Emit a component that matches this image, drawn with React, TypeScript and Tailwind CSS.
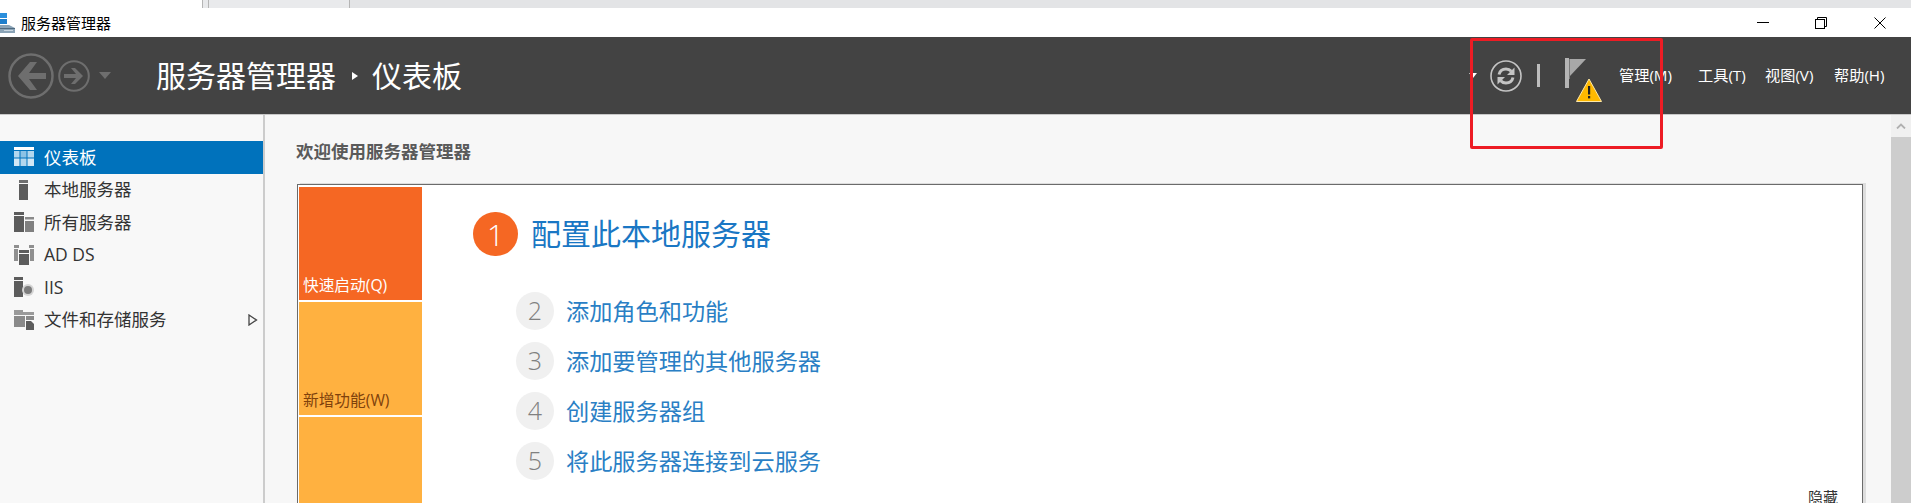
const FONT = "font-['Open_Sans','Noto_Sans_CJK_SC',sans-serif]";

function BackIcon() {
  return (
    <svg width="46" height="46" viewBox="0 0 46 46" fill="none" stroke="#6e6e6e">
      <circle cx="23" cy="23" r="21.5" strokeWidth="2.5" />
      <path d="M38 20v6H21l8 11h-7L10 23 22 9h7l-8 11z" fill="#6e6e6e" stroke="none" />
    </svg>
  );
}

function ForwardIcon() {
  return (
    <svg width="32" height="32" viewBox="0 0 32 32" fill="none" stroke="#6e6e6e">
      <circle cx="16" cy="16" r="14.8" strokeWidth="2" />
      <path d="M6 14h12l-5-6h4l8 8-8 8h-4l5-6H6z" fill="#6e6e6e" stroke="none" />
    </svg>
  );
}

function RefreshIcon() {
  return (
    <svg width="32" height="32" viewBox="0 0 32 32" fill="none" stroke="#c4c4c4">
      <circle cx="16" cy="16" r="15" strokeWidth="1.6" />
      <path d="M9 14.500c.8-3.400 3.600-5.500 7-5.500 2.200 0 4 .8 5.300 2.300" strokeWidth="3" />
      <path d="M24.500 7.500v7.500h-7.500z" fill="#c4c4c4" stroke="none" />
      <path d="M23 17.500c-.8 3.400-3.600 5.500-7 5.500-2.200 0-4-.8-5.300-2.300" strokeWidth="3" />
      <path d="M7.500 24.500v-7.500h7.500z" fill="#c4c4c4" stroke="none" />
    </svg>
  );
}

function FlagWarningIcon() {
  return (
    <svg width="38" height="46" viewBox="0 0 38 46">
      <rect x="0" y="0" width="4" height="30" fill="#b5b5b5" />
      <rect x="4" y="1" width="1" height="20" fill="#7a7a7a" />
      <path d="M5 1h16L5 18z" fill="#a8a8a8" />
      <path d="M24 21 36.500 43.500H11.500z" fill="#ffb900" stroke="#ffe9a8" strokeWidth="1" strokeLinejoin="round" />
      <rect x="23" y="28" width="2.200" height="8.500" fill="#222" />
      <rect x="23" y="38" width="2.200" height="2.400" fill="#222" />
    </svg>
  );
}

function AppIcon() {
  return (
    <svg width="16" height="20" viewBox="0 0 16 20">
      <rect x="0" y="0" width="7" height="5" fill="#2b8fdc" />
      <rect x="0" y="6" width="7" height="5" fill="#1f7fcc" />
      <path d="M0 12h9l6 3v5H0z" fill="#8aa3b6" />
      <rect x="0" y="15" width="15" height="1" fill="#4f6a80" />
      <rect x="4" y="17" width="9" height="1" fill="#c9d6e0" />
    </svg>
  );
}

function DashIcon() {
  return (
    <svg width="20" height="20" viewBox="0 0 20 20">
      <rect x="0" y="0" width="20" height="3" fill="#ffffff" />
      <rect x="0" y="4" width="5.500" height="6.500" fill="#b3d7ee" />
      <rect x="6.500" y="4" width="6" height="6.500" fill="#8cc2e5" />
      <rect x="13.500" y="4" width="6.500" height="6.500" fill="#b3d7ee" />
      <rect x="0" y="11.500" width="5.500" height="7.500" fill="#d2e7f5" />
      <rect x="6.500" y="11.500" width="6" height="7.500" fill="#b3d7ee" />
      <rect x="13.500" y="11.500" width="6.500" height="7.500" fill="#d2e7f5" />
    </svg>
  );
}

function LocalIcon() {
  return (
    <svg width="20" height="20" viewBox="0 0 20 20">
      <rect x="5" y="0" width="9" height="3" fill="#6f6f6f" />
      <rect x="5" y="4" width="9" height="16" fill="#5c5c5c" />
    </svg>
  );
}

function AllIcon() {
  return (
    <svg width="20" height="20" viewBox="0 0 20 20">
      <rect x="0" y="0" width="10" height="3" fill="#5c5c5c" />
      <rect x="0" y="4" width="10" height="16" fill="#5c5c5c" />
      <rect x="11" y="5" width="9" height="2.500" fill="#8a8a8a" />
      <rect x="11" y="9" width="9" height="11" fill="#808080" />
    </svg>
  );
}

function AdIcon() {
  return (
    <svg width="20" height="20" viewBox="0 0 20 20">
      <rect x="0" y="0" width="5" height="3" fill="#8f8f8f" />
      <rect x="0" y="4" width="4" height="12" fill="#8f8f8f" />
      <rect x="15" y="0" width="5" height="3" fill="#8f8f8f" />
      <rect x="16" y="4" width="4" height="12" fill="#8f8f8f" />
      <rect x="5" y="5" width="10" height="3" fill="#5c5c5c" />
      <rect x="5" y="9" width="10" height="11" fill="#5c5c5c" />
    </svg>
  );
}

function IisIcon() {
  return (
    <svg width="20" height="20" viewBox="0 0 20 20">
      <rect x="0" y="0" width="9" height="3" fill="#5c5c5c" />
      <rect x="0" y="4" width="9" height="16" fill="#5c5c5c" />
      <circle cx="14" cy="13" r="6" fill="#d5d5d5" />
      <circle cx="14" cy="13" r="4" fill="#7c7c7c" />
    </svg>
  );
}

function FilesIcon() {
  return (
    <svg width="20" height="20" viewBox="0 0 20 20">
      <path d="M0 0h9v2h11v3H0z" fill="#9a9a9a" />
      <rect x="0" y="6" width="11" height="11" fill="#8a8a8a" />
      <rect x="12" y="6" width="8" height="4" fill="#8a8a8a" />
      <path d="M12 11h5l3 3v6h-8z" fill="#5c5c5c" />
    </svg>
  );
}

const navItems = [
  { label: '仪表板', icon: <DashIcon />, active: true },
  { label: '本地服务器', icon: <LocalIcon /> },
  { label: '所有服务器', icon: <AllIcon /> },
  { label: 'AD DS', icon: <AdIcon /> },
  { label: 'IIS', icon: <IisIcon /> },
  { label: '文件和存储服务', icon: <FilesIcon />, arrow: true },
];

const steps = [
  { n: 2, label: '添加角色和功能' },
  { n: 3, label: '添加要管理的其他服务器' },
  { n: 4, label: '创建服务器组' },
  { n: 5, label: '将此服务器连接到云服务' },
];

const menus = [
  { label: '管理(M)', w: 'w-[79px]' },
  { label: '工具(T)', w: 'w-[67px]' },
  { label: '视图(V)', w: 'w-[69px]' },
  { label: '帮助(H)', w: 'w-[77px]' },
];

export default function App() {
  return (
    <div className={`relative flex h-[503px] w-[1911px] flex-col overflow-hidden bg-white ${FONT}`}>
      {/* sliver of the window behind */}
      <div className="flex h-2 shrink-0">
        <div className="w-[203px] border-r border-[#b5b5b5] bg-white" />
        <div className="w-[6px] border-r border-[#b5b5b5] bg-[#e8e9eb]" />
        <div className="w-[141px] border-r border-[#b5b5b5] bg-[#e9eaec]" />
        <div className="flex-1 bg-[#e3e4e6]" />
      </div>

      {/* title bar */}
      <div className="flex h-[29px] shrink-0 items-center">
        <div className="flex items-center gap-[5px]">
          <AppIcon />
          <span className="text-[15px] leading-5 text-black">服务器管理器</span>
        </div>
        <div className="ml-auto flex pr-[2px]">
          <div className="flex w-[58px] items-center justify-center">
            <div className="h-px w-3 bg-black" />
          </div>
          <div className="flex w-[58px] items-center justify-center">
            <svg width="12" height="12" viewBox="0 0 12 12" fill="none" stroke="#000">
              <rect x="0.500" y="2.500" width="9" height="9" />
              <path d="M2.500 2.500v-2h9v9h-2" />
            </svg>
          </div>
          <div className="flex w-[59px] items-center justify-center">
            <svg width="12" height="12" viewBox="0 0 12 12" fill="none" stroke="#000">
              <path d="M0.500 0.500l11 11M11.500 0.500l-11 11" />
            </svg>
          </div>
        </div>
      </div>

      {/* dark header */}
      <div className="flex h-[78px] shrink-0 items-center border-b border-[#c8c8c8] bg-[#434343] text-white">
        <div className="ml-2 flex items-center gap-1">
          <BackIcon />
          <ForwardIcon />
          <div className="ml-[5px] h-0 w-0 border-x-[6px] border-t-[7px] border-x-transparent border-t-[#6e6e6e]" />
        </div>
        <span className="ml-[45px] text-[30px] leading-10">服务器管理器</span>
        <div className="ml-[16px] h-0 w-0 border-y-[4px] border-l-[6px] border-y-transparent border-l-white" />
        <span className="ml-[14px] text-[30px] leading-10">仪表板</span>

        <div className="ml-auto flex items-center">
          <div className="mr-[13px] h-0 w-0 border-x-[4px] border-t-[5px] border-x-transparent border-t-white" />
          <RefreshIcon />
          <div className="ml-[15px] h-[23px] w-[3px] bg-[#bdbdbd]" />
          <div className="ml-[25px] mt-[11px]">
            <FlagWarningIcon />
          </div>
          <div className="ml-[16px] flex pb-[1px] text-[15.200px] leading-5">
            {menus.map((m) => (
              <span key={m.label} className={`${m.w} whitespace-nowrap`}>
                {m.label}
              </span>
            ))}
          </div>
        </div>
      </div>

      <div className="flex min-h-0 flex-1">
        {/* sidebar */}
        <div className="w-[265px] shrink-0 border-r-2 border-[#cccccc] bg-[#f8f8f8] pt-[26px]">
          {navItems.map((item) => (
            <div
              key={item.label}
              className={`flex h-[32.500px] items-center pl-[14px] pr-[5px] text-[17.500px] ${
                item.active ? 'bg-[#0072bc] text-white' : 'text-[#333333]'
              }`}
            >
              <span className="flex w-[30px] shrink-0">{item.icon}</span>
              <span className="whitespace-nowrap pb-[1px]">{item.label}</span>
              {item.arrow && (
                <svg className="ml-auto" width="10" height="12" viewBox="0 0 10 12" fill="none" stroke="#444" strokeWidth="1.300">
                  <path d="M1 1l7.500 5L1 11z" />
                </svg>
              )}
            </div>
          ))}
        </div>

        {/* content */}
        <div className="min-w-0 flex-1 bg-[#f7f7f7] pl-[32px] pr-[28px] pt-[24px]">
          <h1 className="-ml-[1px] text-[17.500px] leading-6 font-bold text-[#5a5a5a]">欢迎使用服务器管理器</h1>
          <div className="mt-[21px] flex h-[400px] border border-[#6b6b6b] bg-white p-[1px] pt-[2px] shadow-[3px_-1px_0_#dddddd]">
            <div className="flex w-[123px] shrink-0 flex-col gap-[2px]">
              <div className="flex h-[113px] shrink-0 items-end bg-[#f56723] px-[4px] pb-[5px] text-[15.700px] leading-5 text-white">
                快速启动(Q)
              </div>
              <div className="flex h-[113px] shrink-0 items-end bg-[#ffb140] px-[4px] pb-[5px] text-[15.700px] leading-5 text-[#7f420c]">
                新增功能(W)
              </div>
              <div className="h-[170px] shrink-0 bg-[#ffb140]" />
            </div>

            <div className="flex min-w-0 flex-1 flex-col pl-[51px] pr-[23px] pt-[25px]">
              <div className="flex items-center gap-[13px]">
                <div className="flex h-[44px] w-[45px] items-center justify-center rounded-full bg-[#f56723] text-[30px] font-light text-white">
                  1
                </div>
                <span className="text-[30px] leading-10 text-[#1a77c4]">配置此本地服务器</span>
              </div>
              <div className="mt-[30px] flex flex-col pl-[43px]">
                {steps.map((s) => (
                  <div key={s.n} className="flex h-[50px] items-center gap-[12px]">
                    <div className="flex h-[38px] w-[38px] items-center justify-center rounded-full bg-[#f0f0f0] text-[25px] font-light text-[#808080]">
                      {s.n}
                    </div>
                    <span className="text-[23.200px] leading-8 text-[#2a7fc5]">{s.label}</span>
                  </div>
                ))}
              </div>
              <div className="mt-[1px] flex justify-end text-[15px] leading-5 text-[#333333]">隐藏</div>
            </div>
          </div>
        </div>

        {/* scrollbar */}
        <div className="flex w-5 shrink-0 flex-col bg-[#cdcdcd]">
          <div className="flex h-[22px] items-center justify-center bg-[#f0f0f0]">
            <svg width="10" height="6" viewBox="0 0 10 6" fill="none" stroke="#b0b0b0" strokeWidth="1.800">
              <path d="M1 5.500l4-4 4 4" />
            </svg>
          </div>
        </div>
      </div>

      {/* red annotation box drawn on the screenshot */}
      <div className="absolute left-[1470px] top-[38px] h-[111px] w-[193px] rounded-[2px] border-[3.500px] border-[#ed1c24]" />
    </div>
  );
}
